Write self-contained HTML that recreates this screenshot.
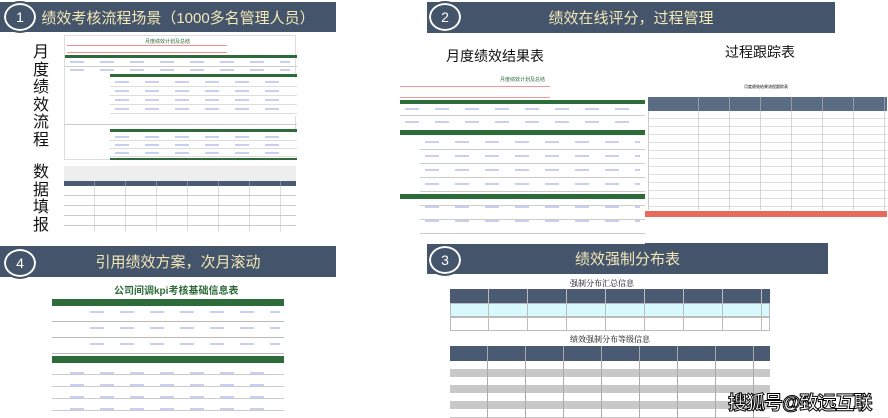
<!DOCTYPE html>
<html><head><meta charset="utf-8"><style>
*{margin:0;padding:0;box-sizing:border-box}
body{width:888px;height:418px;background:#fff;position:relative;overflow:hidden;font-family:"Liberation Sans","Noto Sans CJK SC",sans-serif}
.ban{position:absolute;background:#44546a;color:#f3e8b8;font-size:15px;display:flex;align-items:center;justify-content:center}
.circ{position:absolute;width:36px;height:32px;border-radius:50%;border:2px solid #44546a;background:#44546a;box-shadow:inset 0 0 0 2px #fff;color:#fff;font-size:14px;display:flex;align-items:center;justify-content:center}
.abs{position:absolute}
.g{background:#2e6b3a}
.ln{position:absolute;height:1px;background:#ccc}
.dk{background:#4a5a70}
.vt{position:absolute;left:33px;font-size:16px;line-height:17.5px;width:20px;color:#111}
.lbl{position:absolute;font-size:14px;color:#111}
.cols{position:absolute;background:repeating-linear-gradient(90deg,transparent 0 30px,#bbb 30px 31px)}
.txt{position:absolute;background:repeating-linear-gradient(90deg,#c9cff0 0 14px,transparent 14px 30px);height:2px}
</style></head><body>

<div class="ban" style="left:0;top:2px;width:336px;height:30px;padding-left:20px">绩效考核流程场景（1000多名管理人员）</div>
<div class="circ" style="left:2px;top:1px">1</div>
<div class="ban" style="left:427px;top:2px;width:408px;height:31px">绩效在线评分，过程管理</div>
<div class="circ" style="left:427px;top:1px">2</div>
<div class="ban" style="left:0;top:246px;width:336px;height:31px;padding-left:20px">引用绩效方案，次月滚动</div>
<div class="circ" style="left:2px;top:247px">4</div>
<div class="ban" style="left:427px;top:243px;width:401px;height:31px">绩效强制分布表</div>
<div class="circ" style="left:427px;top:244px">3</div>

<div class="vt" style="top:44px">月度绩效流程</div>
<div class="vt" style="top:164px">数据填报</div>

<!-- screenshot 1 -->
<div class="abs" style="left:64px;top:35px;width:232px;height:125px;border:1px solid #ddd">
 <div class="abs" style="left:80px;top:2px;font-size:5px;color:#2e6b3a">月度绩效计划及总结</div>
 <div class="abs" style="left:2px;top:9px;width:160px;height:8px;border-top:1px solid #e44;border-bottom:1px solid #e44;opacity:.6"></div>
 <div class="abs g" style="left:0;top:19px;width:232px;height:3px"></div>
 <div class="txt" style="left:5px;top:25px;width:220px"></div>
 <div class="txt" style="left:5px;top:33px;width:220px"></div>
 <div class="ln" style="left:0;top:30px;width:232px"></div>
 <div class="abs g" style="left:45px;top:38px;width:187px;height:3px"></div>
 <div class="abs" style="left:45px;top:42px;width:187px;height:38px;background:repeating-linear-gradient(#fff 0 8px,#ddd 8px 9px)"></div>
 <div class="txt" style="left:50px;top:45px;width:175px"></div>
 <div class="txt" style="left:50px;top:54px;width:175px"></div>
 <div class="txt" style="left:50px;top:63px;width:175px"></div>
 <div class="txt" style="left:50px;top:72px;width:175px"></div>
 <div class="ln" style="left:0;top:88px;width:232px"></div>
 <div class="abs g" style="left:45px;top:93px;width:187px;height:3px"></div>
 <div class="abs" style="left:45px;top:97px;width:187px;height:26px;background:repeating-linear-gradient(#fff 0 7px,#ddd 7px 8px)"></div>
 <div class="txt" style="left:50px;top:100px;width:175px"></div>
 <div class="txt" style="left:50px;top:108px;width:175px"></div>
 <div class="txt" style="left:50px;top:116px;width:175px"></div>
 <div class="abs g" style="left:45px;top:122px;width:187px;height:2px"></div>
</div>
<div class="abs" style="left:64px;top:166px;width:232px;height:16px;background:#eee"></div>
<div class="abs dk" style="left:64px;top:181px;width:232px;height:5px"></div>
<div class="abs" style="left:64px;top:186px;width:232px;height:46px;background:repeating-linear-gradient(#fff 0 9px,#ccc 9px 10px)"></div>
<div class="cols" style="left:64px;top:181px;width:232px;height:51px;opacity:.5"></div>

<div class="lbl" style="left:446px;top:46px">月度绩效结果表</div>
<div class="lbl" style="left:725px;top:42px">过程跟踪表</div>

<!-- screenshot 2 -->
<div class="abs" style="left:400px;top:70px;width:245px;height:170px">
 <div class="abs" style="left:100px;top:6px;font-size:5px;color:#2e6b3a">月度绩效计划及总结</div>
 <div class="abs" style="left:0;top:16px;width:150px;height:12px;border-top:1px solid #e55;border-bottom:1px solid #e55;opacity:.6"></div>
 <div class="abs g" style="left:0;top:30px;width:245px;height:4px"></div>
 <div class="txt" style="left:5px;top:38px;width:235px"></div>
 <div class="ln" style="left:0;top:45px;width:245px"></div>
 <div class="txt" style="left:5px;top:51px;width:235px"></div>
 <div class="abs g" style="left:0;top:60px;width:245px;height:5px"></div>
 <div class="abs" style="left:20px;top:66px;width:225px;height:108px;background:repeating-linear-gradient(#fff 0 13px,#ccc 13px 14px)"></div>
 <div class="txt" style="left:25px;top:71px;width:215px"></div>
 <div class="txt" style="left:25px;top:85px;width:215px"></div>
 <div class="txt" style="left:25px;top:99px;width:215px"></div>
 <div class="txt" style="left:25px;top:113px;width:215px"></div>
 <div class="abs g" style="left:0;top:124px;width:245px;height:5px"></div>
 <div class="txt" style="left:25px;top:136px;width:215px"></div>
 <div class="txt" style="left:25px;top:150px;width:215px"></div>
</div>

<!-- tracking table -->
<div class="abs" style="left:645px;top:84px;width:242px;font-size:4px;text-align:center">月度绩效结果流程跟踪表</div>
<div class="abs dk" style="left:648px;top:97px;width:239px;height:14px;background:#5a6b84"></div>
<div class="abs" style="left:648px;top:111px;width:239px;height:99px;background:repeating-linear-gradient(#fff 0 7px,#ddd 7px 8px);border-left:1px solid #ccc"></div>
<div class="cols" style="left:668px;top:97px;width:219px;height:113px;opacity:.6"></div>
<div class="abs" style="left:645px;top:211px;width:242px;height:6px;background:#e86a5c"></div>

<!-- screenshot 4 -->
<div class="abs" style="left:114px;top:282px;font-size:10px;font-weight:bold;color:#2e6b3a">公司间调kpi考核基础信息表</div>
<div class="abs g" style="left:52px;top:299px;width:232px;height:7px"></div>
<div class="abs" style="left:52px;top:306px;width:232px;height:50px;background:repeating-linear-gradient(#fff 0 15px,#bbb 15px 16px)"></div>
<div class="txt" style="left:90px;top:311px;width:190px"></div>
<div class="txt" style="left:90px;top:327px;width:190px"></div>
<div class="txt" style="left:90px;top:343px;width:190px"></div>
<div class="abs g" style="left:52px;top:356px;width:232px;height:7px"></div>
<div class="abs" style="left:52px;top:363px;width:232px;height:55px;background:repeating-linear-gradient(#fff 0 11px,#ccc 11px 12px)"></div>
<div class="txt" style="left:70px;top:372px;width:210px"></div>
<div class="txt" style="left:70px;top:384px;width:210px"></div>
<div class="txt" style="left:70px;top:396px;width:210px"></div>
<div class="txt" style="left:70px;top:408px;width:210px"></div>

<!-- screenshot 3 -->
<div class="abs" style="left:570px;top:278px;font-size:8px;font-family:'Noto Serif CJK SC',serif">强制分布汇总信息</div>
<div class="abs" style="left:450px;top:289px;width:320px;height:14px;background:#4a5a72"></div>
<div class="abs" style="left:450px;top:303px;width:320px;height:14px;background:#d8fafd;border:1px solid #bbb"></div>
<div class="abs" style="left:450px;top:317px;width:320px;height:14px;background:#fff;border:1px solid #bbb"></div>
<div class="cols" style="left:450px;top:289px;width:320px;height:42px;background:repeating-linear-gradient(90deg,transparent 0 38px,#bbb 38px 39px)"></div>
<div class="abs" style="left:570px;top:334px;font-size:8px;font-family:'Noto Serif CJK SC',serif">绩效强制分布等级信息</div>
<div class="abs" style="left:450px;top:346px;width:320px;height:15px;background:#4a5a72"></div>
<div class="abs" style="left:450px;top:361px;width:320px;height:57px;background:repeating-linear-gradient(#fff 0 8px,#c8c8c8 8px 16px)"></div>
<div class="cols" style="left:450px;top:346px;width:320px;height:72px;background:repeating-linear-gradient(90deg,transparent 0 37px,#aaa 37px 38px)"></div>

<div class="abs" style="left:728px;top:388px;font-size:19px;font-weight:bold;color:#fff;-webkit-text-stroke:1px #000;letter-spacing:-1px">搜狐号@致远互联</div>
</body></html>
